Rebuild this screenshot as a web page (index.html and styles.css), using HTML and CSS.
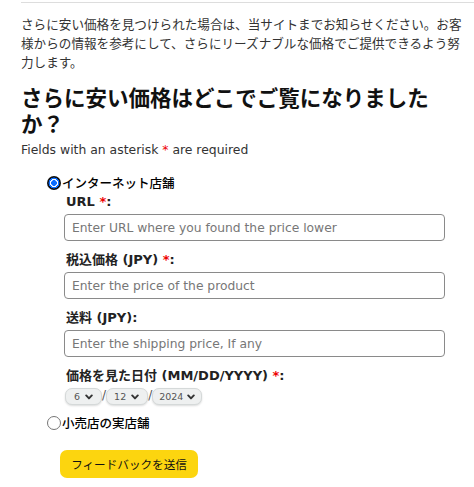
FILE: index.html
```html
<html>

<head>
  <title>価格フィードバック</title>
  <link rel="stylesheet" href="styles.css">
</head>

<body>
  <div class="page">
    <hr class="rule">
    <p class="intro">さらに安い価格を見つけられた場合は、当サイトまでお知らせください。お客様からの情報を参考にして、さらにリーズナブルな価格でご提供できるよう努力します。</p>
    <h2 class="title">さらに安い価格はどこでご覧になりましたか？</h2>
    <p class="note">Fields with an asterisk <span class="req">*</span> are required</p>

    <form class="feedback">
      <label class="choice">
        <input type="radio" name="store" class="radio" checked>
        <span>インターネット店舗</span>
      </label>
      <div class="fields">
        <label class="field-label">URL <span class="req">*</span>:</label>
        <input type="text" class="text-input" placeholder="Enter URL where you found the price lower">

        <label class="field-label">税込価格 (JPY) <span class="req">*</span>:</label>
        <input type="text" class="text-input" placeholder="Enter the price of the product">

        <label class="field-label">送料 (JPY):</label>
        <input type="text" class="text-input" placeholder="Enter the shipping price, If any">

        <label class="field-label">価格を見た日付 (MM/DD/YYYY) <span class="req">*</span>:</label>
        <div class="date-row">
          <span class="select select-day">6<svg width="8" height="6" viewBox="0 0 8 6"><path d="M1.2 1.4 L4 4.4 L6.8 1.4" fill="none" stroke="#333" stroke-width="1.9" stroke-linecap="round" stroke-linejoin="round"/></svg></span>
          <span class="slash">/</span>
          <span class="select">12<svg width="8" height="6" viewBox="0 0 8 6"><path d="M1.2 1.4 L4 4.4 L6.8 1.4" fill="none" stroke="#333" stroke-width="1.9" stroke-linecap="round" stroke-linejoin="round"/></svg></span>
          <span class="slash">/</span>
          <span class="select select-year">2024<svg width="8" height="6" viewBox="0 0 8 6"><path d="M1.2 1.4 L4 4.4 L6.8 1.4" fill="none" stroke="#333" stroke-width="1.9" stroke-linecap="round" stroke-linejoin="round"/></svg></span>
        </div>
      </div>
      <label class="choice choice-last">
        <input type="radio" name="store" class="radio">
        <span>小売店の実店舗</span>
      </label>
      <button type="button" class="submit">フィードバックを送信</button>
    </form>
  </div>
</body>

</html>
```

FILE: styles.css
```css
body {
  margin: 0;
  font-family: "DejaVu Sans", "Noto Sans CJK JP", sans-serif;
  color: #222;
}

.page {
  padding-left: 21px;
  width: 444px;
}

.rule {
  border: 0;
  border-top: 1px solid #ddd;
  margin: 2px -30px 0 0;
}

.intro {
  font-family: "Noto Sans CJK JP", sans-serif;
  font-size: 12.6px;
  line-height: 19px;
  color: #333;
  margin: 11px 0 0;
}

.title {
  font-family: "Noto Sans CJK JP", sans-serif;
  font-size: 21.5px;
  line-height: 26px;
  font-weight: bold;
  color: #111;
  margin: 13px 0 0;
}

.note {
  font-size: 12.4px;
  line-height: 17px;
  color: #333;
  margin: 5px 0 0;
}

.req {
  color: #e00;
}

.feedback {
  margin: 16px 0 0 26px;
}

.choice {
  display: flex;
  align-items: center;
  font-family: "Noto Sans CJK JP", sans-serif;
  font-size: 12.5px;
  line-height: 18px;
  font-weight: 500;
  color: #000;
}

.radio {
  appearance: none;
  box-sizing: border-box;
  width: 14px;
  height: 14px;
  margin: 0 1px 0 0;
  border: 1px solid #767676;
  border-radius: 50%;
  background: #fff;
}

.radio:checked {
  border: 0;
  background: radial-gradient(circle, #0a6cff 0 2.6px, #fff 3.1px 3.8px, #0a6cff 4.3px 5.2px, #111 5.7px);
}

.fields {
  display: flex;
  flex-direction: column;
  align-items: flex-start;
  padding-left: 17px;
}

.field-label {
  font-size: 13px;
  line-height: 18px;
  font-weight: bold;
  color: #222;
  margin: 1px 0 3px 2px;
}

.field-label + .text-input {
  margin-bottom: 9px;
}

.text-input {
  box-sizing: border-box;
  width: 381px;
  height: 27px;
  border: 1px solid #8a8a8a;
  border-radius: 4px;
  padding: 0 7px;
  font-family: "DejaVu Sans", sans-serif;
  font-size: 12.3px;
}

.text-input::placeholder {
  color: #777;
}

.date-row {
  display: flex;
  align-items: flex-start;
  margin-left: 1px;
}

.select {
  display: inline-flex;
  align-items: center;
  gap: 5px;
  box-sizing: border-box;
  height: 17px;
  padding: 0 8px 0 7px;
  background: #eef0f0;
  border: 1px solid #d5d9d9;
  border-radius: 7px;
  box-shadow: 0 1px 2px rgba(15, 17, 17, 0.15);
  font-size: 9.5px;
  color: #555;
}

.select-day {
  padding-left: 8px;
  padding-right: 8px;
}

.select-year {
  padding: 0 6px;
  gap: 4px;
}

.slash {
  font-size: 12px;
  line-height: 14px;
  color: #555;
}

.choice-last {
  margin-top: 9px;
}

.submit {
  display: block;
  margin: 18px 0 0 13px;
  width: 138px;
  height: 28px;
  padding: 0;
  background: #fcd50f;
  border: 0;
  border-radius: 7px;
  font-family: "Noto Sans CJK JP", sans-serif;
  font-size: 11.6px;
  color: #111;
}
```
